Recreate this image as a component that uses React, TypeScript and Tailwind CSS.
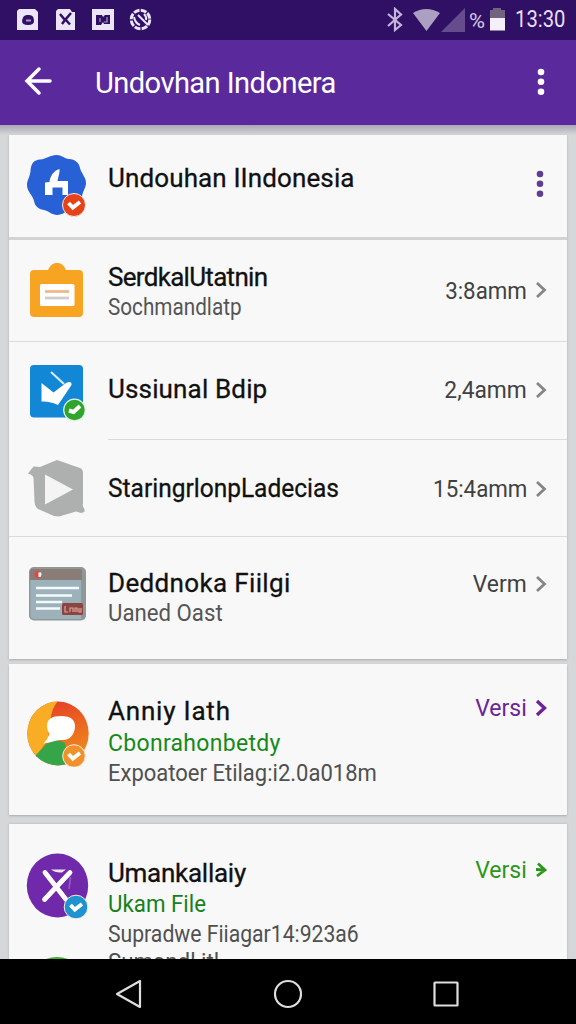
import { ReactNode } from 'react';

const Badge = ({ x, y, r = 11.5, fill }: { x: number; y: number; r?: number; fill: string }) => (
  <g>
    <circle cx={x} cy={y} r={r} fill={fill} stroke="#fbe9e4" strokeWidth="1" />
    <path d={`M${x - 5.5} ${y - 2} L${x - 1.2} ${y + 2.6} L${x + 6} ${y - 3}`} fill="none" stroke="#fff" strokeWidth="3.800" />
  </g>
);

const HouseIcon = () => (
  <svg width="64" height="66" viewBox="0 0 64 66">
    <path
      d="M30.500 1C36 1 38 4.500 43 5C49 5.500 53 8.500 54 14C55 19 60 23 60 29C60 34 56.500 37 56 43C55 50 51 53 45 55C40 57 37 61 31 61C26 61 23 57 18 56C12 55 9 52 8 47C7 41 1 38 1 31C1 26 4 23 4.500 17C5 9 8 6 14 5.500C21 5 24 1 30.500 1Z"
      fill="#2861d6"
    />
    <path d="M19 41V28.500L23.500 28C24 22 28 16.500 33.500 15C34 19 32 23 31.500 27H42V41H36.500V33.500H26.500V41Z" fill="#fff" />
    <Badge x={48} y={51} fill="#e64219" />
  </svg>
);

const ClipboardIcon = () => (
  <svg width="64" height="66" viewBox="0 0 64 66">
    <path d="M8 8H22C24 3.500 27 1 31 1C35.500 1 38 3.500 40 8H53Q57 8 57 12V51Q57 55 53 55H8Q4 55 4 51V12Q4 8 8 8Z" fill="#f7a422" />
    <rect x="14" y="22" width="34.500" height="22" rx="1.500" fill="#fff" />
    <path d="M19 29.500H43" stroke="#f0b886" strokeWidth="2.800" />
    <path d="M19 36H43" stroke="#cfcccb" strokeWidth="2.800" />
  </svg>
);

const TaskIcon = () => (
  <svg width="64" height="66" viewBox="0 0 64 66">
    <rect x="4" y="1" width="53" height="52.500" rx="4" fill="#1187d5" />
    <path d="M15.500 19L27.500 28.500L40 19Q46 16 45.500 21L32 41Q24 37 15.500 37.500Z" fill="#fff" />
    <path d="M25 8L38 20" stroke="#d3ecfb" strokeWidth="2.200" />
    <circle cx="48.500" cy="46" r="10.800" fill="#30a52e" stroke="#e2f5e0" strokeWidth="1.200" />
    <path d="M43 46.500L47.500 48L54 42" fill="none" stroke="#fff" strokeWidth="4" />
  </svg>
);

const PlayIcon = () => (
  <svg width="64" height="66" viewBox="0 0 64 66">
    <path
      d="M31 1L54 9Q57 10 57 14V44Q56 48 58.500 50V53L55 54L50 52.500L33 57.500L28 57L12 50Q9 48 8.500 43L7.500 19Q7 16 2 14.500L7.500 7.500L14 8Z"
      fill="#aeb0b0"
    />
    <path d="M19 15.500L47 30.500L19 45.500Z" fill="#f4f4f4" />
  </svg>
);

const WindowIcon = () => (
  <svg width="64" height="66" viewBox="0 0 64 66">
    <rect x="3" y="1" width="57" height="53.500" rx="5" fill="#8f9797" />
    <path d="M4.500 14H55V53H8Q4.500 53 4.500 49Z" fill="#9db1bb" />
    <path d="M6 3H54Q56 3 56 6V14H4V6Q4 3 6 3Z" fill="#8a7c77" />
    <path d="M10 22H53M10 29.500H46M10 36H36M10 42.500H34" stroke="#f4fafc" strokeWidth="2.500" />
    <circle cx="12" cy="8.500" r="3.500" fill="#e0493f" />
    <path d="M12.500 6.500Q16 5.500 15.500 8.500L14.500 11H12.500Z" fill="#fff" />
    <rect x="36" y="37" width="21" height="12" rx="1.500" fill="#8c4440" />
    <path d="M39 40V46H42M44 46V42H47V46M49 46V42H51V46M53 42V46H55V42" fill="none" stroke="#d9a49d" strokeWidth="1.200" />
  </svg>
);

const ChatIcon = () => (
  <svg width="64" height="66" viewBox="0 0 64 66">
    <clipPath id="chat">
      <ellipse cx="32" cy="32.500" rx="30.700" ry="32" />
    </clipPath>
    <linearGradient id="warm" x1="0" y1="0" x2="0.300" y2="1">
      <stop offset="0" stopColor="#e53527" />
      <stop offset="0.500" stopColor="#ea6320" />
      <stop offset="1" stopColor="#ef8a1d" />
    </linearGradient>
    <g clipPath="url(#chat)">
      <rect width="64" height="66" fill="url(#warm)" />
      <path d="M32 0Q26 7 24.500 18L22 38L10 56L0 60V0Z" fill="#f8ad25" />
      <path d="M8 56L21 42.500Q30 37 39 42L44 66H8Z" fill="#36a54a" />
    </g>
    <path d="M35 15C45 15 49 19 49 25C49 33 44 39 37 39Q31 38.500 27 40.500Q22 42 17.500 42.500Q22 38 23.500 33Q21 29 21 25C21 18 26 15 35 15Z" fill="#fff" />
    <Badge x={48} y={55} r={11.300} fill="#f0912a" />
  </svg>
);

const CrossIcon = () => (
  <svg width="64" height="67" viewBox="0 0 64 67">
    <ellipse cx="31.500" cy="32.500" rx="30.700" ry="32" fill="#6f29aa" />
    <path d="M19 19.500L40 46.500M44 19.500L18.500 46.500" stroke="#fff" strokeWidth="4.800" strokeLinecap="round" />
    <path d="M25 16.500H40L36 19.500Q29 20 25 16.500Z" fill="#f1e5fb" />
    <path d="M44.500 24L43 36" stroke="#9560c6" strokeWidth="1.500" />
    <Badge x={50} y={54} r={11.800} fill="#1d93cf" />
  </svg>
);

const Dots = ({ className }: { className: string }) => (
  <svg width="8" height="28" viewBox="0 0 8 28" fill="currentColor" className={className}>
    <circle cx="4" cy="4" r="3.300" />
    <circle cx="4" cy="13.800" r="3.300" />
    <circle cx="4" cy="23.800" r="3.300" />
  </svg>
);

const Chevron = ({ width = 2.8, arrow = false }: { width?: number; arrow?: boolean }) => (
  <svg width="12" height="18" viewBox="0 0 12 18" fill="none" stroke="currentColor" strokeWidth={width} className="shrink-0">
    <path d={arrow ? 'M3 2.500L10 9L2 15M1 8.500L10 9' : 'M2 2L9.500 9L2 16'} />
  </svg>
);

type RowProps = {
  icon: ReactNode;
  iconClass: string;
  textClass: string;
  sideClass?: string;
  className: string;
  side?: ReactNode;
  children: ReactNode;
};

const Row = ({ icon, iconClass, textClass, sideClass, className, side, children }: RowProps) => (
  <div className={`flex items-start pl-[17px] pr-5 ${className}`}>
    <div className={`w-[82px] shrink-0 ${iconClass}`}>{icon}</div>
    <div className={`flex-1 whitespace-nowrap ${textClass}`}>{children}</div>
    {side && <div className={`flex shrink-0 items-center text-2xl leading-[30px] ${sideClass}`}>{side}</div>}
  </div>
);

const Title = ({ className, children }: { className: string; children: ReactNode }) => (
  <div className={`origin-left text-[26px] leading-[30px] text-[#111] [-webkit-text-stroke:0.3px_#111] ${className}`}>{children}</div>
);

const Sub = ({ className, children }: { className: string; children: ReactNode }) => (
  <div className={`origin-left text-[23px] leading-[30px] ${className}`}>{children}</div>
);

const Value = ({ className, children }: { className: string; children: ReactNode }) => (
  <>
    <span className={`inline-block origin-right ${className}`}>{children}</span>
    <span className="text-[#858585]">
      <Chevron />
    </span>
  </>
);

const StatusBar = () => (
  <div className="flex h-10 items-center bg-[#301064] pl-[17px] pr-[11px] text-[#e8def5]">
    <svg width="136" height="24" viewBox="0 0 136 24">
      <path d="M2 1H18L21 4V22H0V3Z" fill="#ece4f7" />
      <path d="M5 13Q6 6 11 7Q17 6 17 13Q17 17 11 17Q5 17 5 13Z" fill="#301064" />
      <path d="M9 12.500H14" stroke="#a697c5" strokeWidth="2" />
      <path d="M41 1H53L55 4H58V22H39V3Z" fill="#ece4f7" />
      <path d="M43 6L48 12L54 5M48 11L53 16.500M48 12L45 16" fill="none" stroke="#301064" strokeWidth="2.500" />
      <rect x="75" y="1" width="22" height="21" fill="#ece4f7" />
      <path d="M79 7H85L86 9L88 7H93V16H87L86 14L84 17H79Z" fill="#301064" />
      <path d="M83 10V14M90 9V14H87" fill="none" stroke="#a697c5" strokeWidth="1.200" />
      <circle cx="123.500" cy="11.500" r="9.300" fill="none" stroke="#ece4f7" strokeWidth="3" strokeDasharray="6 1.300" />
      <path d="M117 9Q118 15 123 17M121 7L131 17M127 6Q130 9 129 12" fill="none" stroke="#ece4f7" strokeWidth="2" />
    </svg>
    <svg width="122" height="26" viewBox="0 0 122 26" className="ml-auto">
      <path d="M2 7L15 18L9 23V2L15 7.500L2 19" fill="none" stroke="#c4b6da" strokeWidth="2.200" />
      <path d="M27 6Q40 -2 54 6L40.500 24Z" fill="#aba0c1" />
      <path d="M79 1V25H55Z" fill="#654c8c" />
      <path d="M107 1H115V3H119V13H104V3H107Z" fill="#72647e" />
      <rect x="104" y="11" width="15" height="12.500" fill="#f5effb" />
      <text x="83" y="20.500" fontSize="21" textLength="16" lengthAdjust="spacingAndGlyphs" fill="#d4c9e4">
        %
      </text>
    </svg>
    <div className="ml-[7px] w-[50px] text-[23px] leading-10">
      <span className="inline-block origin-left scale-x-[0.88]">13:30</span>
    </div>
  </div>
);

const AppBar = () => (
  <div className="flex h-[85px] items-center bg-[#5a2a9c] pl-6 pr-[31px] text-white">
    <svg width="28" height="30" viewBox="0 0 28 30" fill="none" stroke="#fff" strokeWidth="3.500" strokeLinecap="round" className="mb-[3px]">
      <path d="M15 3L3 15L15 27M3 15H26" />
    </svg>
    <h1 className="ml-[43px] flex-1 origin-left scale-x-[0.97] whitespace-nowrap text-[30px] leading-[36px] tracking-[-0.6px]">Undovhan Indonera</h1>
    <Dots className="mb-[2px] text-white" />
  </div>
);

const NavBar = () => (
  <div className="flex h-[65px] shrink-0 items-center bg-black pl-[115px] pr-[116px] pt-[5px]">
    <svg width="345" height="32" viewBox="0 0 345 32" fill="none" stroke="#dedede" strokeWidth="2.200">
      <path d="M2 16L25 3V29Z" strokeLinejoin="round" />
      <circle cx="173" cy="16" r="13" />
      <rect x="319.500" y="4.500" width="23" height="23" rx="0.500" />
    </svg>
  </div>
);

const App = () => (
  <div className="flex h-[1024px] w-[576px] flex-col overflow-hidden bg-[#d5d7d8] font-[Roboto,sans-serif]">
    <StatusBar />
    <AppBar />
    <div className="min-h-0 flex-1 overflow-hidden bg-linear-to-b from-[#aaa5b5] to-[#d5d7d8] to-[10px] px-[9px] pt-[10px]">
      <div className="bg-[#f8f8f8] shadow-[0_1px_2px_#aaacae]">
        <Row
          className="h-[102px]"
          icon={<HouseIcon />}
          iconClass="pt-[19px]"
          textClass="pt-7"
          sideClass="pt-[35px] pr-[3px]"
          side={<Dots className="text-[#5f3d91]" />}
        >
          <Title className="tracking-[0.12px]">Undouhan IIndonesia</Title>
        </Row>
        <div className="h-[3px] bg-[#d2d3d4]" />
        <Row
          className="h-[101px]"
          icon={<ClipboardIcon />}
          iconClass="pt-[22px]"
          textClass="pt-[22px]"
          sideClass="gap-2 pt-[34px] text-[#414141]"
          side={<Value className="mt-[2px] scale-x-[0.93]">3:8amm</Value>}
        >
          <Title className="tracking-[-0.7px]">SerdkalUtatnin</Title>
          <Sub className="mt-px scale-x-[0.9] text-[#555]">Sochmandlatp</Sub>
        </Row>
        <div className="h-px bg-[#d9dbdc]" />
        <Row
          className="h-[97px]"
          icon={<TaskIcon />}
          iconClass="pt-[22px]"
          textClass="pt-8"
          sideClass="gap-2 pt-8 text-[#414141]"
          side={<Value className="mt-px scale-x-[0.95]">2,4amm</Value>}
        >
          <Title className="tracking-[0.15px]">Ussiunal Bdip</Title>
        </Row>
        <div className="ml-[99px] h-px bg-[#d9dbdc]" />
        <Row
          className="h-24"
          icon={<PlayIcon />}
          iconClass="pt-[19px]"
          textClass="pt-[33px]"
          sideClass="gap-2 pt-[33px] text-[#414141]"
          side={<Value className="mt-px scale-x-[0.93]">15:4amm</Value>}
        >
          <Title className="scale-x-[0.942]">StaringrlonpLadecias</Title>
        </Row>
        <div className="h-px bg-[#d9dbdc]" />
        <Row
          className="h-[122px]"
          icon={<WindowIcon />}
          iconClass="pt-[29px]"
          textClass="pt-[31px]"
          sideClass="gap-2 pt-[31px] text-[#414141]"
          side={<Value className="mt-px scale-x-[0.95]">Verm</Value>}
        >
          <Title className="tracking-[0.35px]">Deddnoka Fiilgi</Title>
          <Sub className="mt-px scale-x-[0.966] text-[#555]">Uaned Oast</Sub>
        </Row>
      </div>
      <div className="mt-[5px] bg-[#f8f8f8] shadow-[0_1px_2px_#aaacae]">
        <Row
          className="h-[151px]"
          icon={<ChatIcon />}
          iconClass="pt-[37px]"
          textClass="pt-8"
          sideClass="gap-2 pt-[29px] text-[#6c2496]"
          side={
            <>
              <span className="inline-block origin-right scale-x-[0.96]">Versi</span>
              <Chevron width={3.4} />
            </>
          }
        >
          <Title className="tracking-[0.8px]">Anniy Iath</Title>
          <Sub className="mt-[3px] tracking-[0.3px] text-[#16891a]">Cbonrahonbetdy</Sub>
          <Sub className="scale-x-[0.957] text-[#505050]">Expoatoer Etilag:i2.0a018m</Sub>
        </Row>
      </div>
      <div className="mt-[9px] bg-[#f8f8f8] shadow-[0_0_2px_#aaacae]">
        <Row
          className="h-[136px]"
          icon={
            <>
              <CrossIcon />
              <svg width="64" height="34" viewBox="0 0 64 34" className="mt-9">
                <ellipse cx="31" cy="32" rx="31" ry="31" fill="#42ae32" />
              </svg>
            </>
          }
          iconClass="pt-[29px]"
          textClass="pt-[34px]"
          sideClass="gap-2 pt-[31px] text-[#2c961c]"
          side={
            <>
              <span className="inline-block origin-right scale-x-[0.96]">Versi</span>
              <Chevron width={2.8} arrow />
            </>
          }
        >
          <Title className="tracking-[-0.27px]">Umankallaiy</Title>
          <Sub className="mt-[2px] scale-x-[0.97] text-[#16811a]">Ukam File</Sub>
          <Sub className="scale-x-[0.92] text-[#505050]">Supradwe Fiiagar14:923a6</Sub>
          <Sub className="-mt-[2px] scale-x-[0.97] text-[#505050]">Sumandl itl</Sub>
        </Row>
      </div>
    </div>
    <NavBar />
  </div>
);

export default App;
